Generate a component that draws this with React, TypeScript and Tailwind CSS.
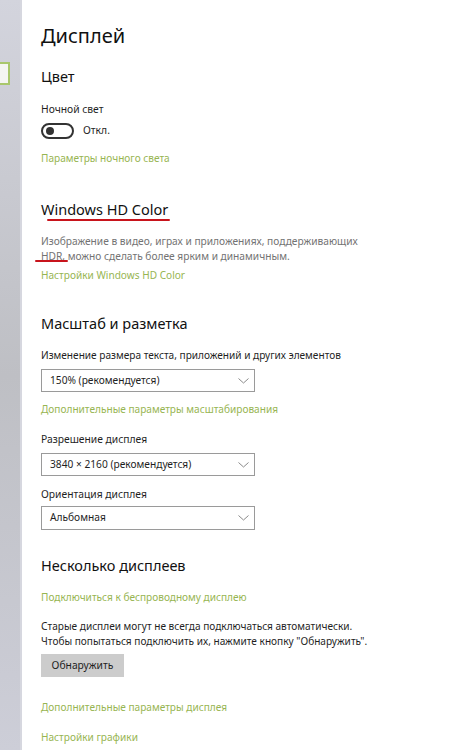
import React from "react";

const link = "block h-[16px] leading-[16px] text-[10.1px] text-[#97b552]";
const label = "block h-[16px] leading-[16px] text-[10.3px] text-[#1f1f1f]";
const h2 = "block h-[20px] leading-[20px] text-[14.5px] text-[#111]";

function Chevron() {
  return (
    <svg width="11" height="6" viewBox="0 0 11 6" className="shrink-0">
      <path d="M0.5 0.5 L5.5 5 L10.5 0.5" fill="none" stroke="#8a8a8a" strokeWidth="1" />
    </svg>
  );
}

function Select({ text, h }: { text: string; h: string }) {
  return (
    <div className={`flex w-[214px] ${h} items-center justify-between border border-[#9a9a9a] bg-white pl-[8px] pr-[5px] text-[10.2px] text-[#1f1f1f]`}>
      <span>{text}</span>
      <Chevron />
    </div>
  );
}

export default function App() {
  return (
    <div
      className="flex h-[750px] w-[476px] overflow-hidden bg-white"
      style={{ fontFamily: '"Noto Sans", "Open Sans", sans-serif' }}
    >
      <div className="relative h-full w-[22px] shrink-0 bg-gradient-to-b from-[#d3d4dd] via-[#bebfc4] to-[#cdced8]">
        <div className="mt-[62px] h-[23px] w-[10px] border-2 border-l-0 border-[#a9c76c] bg-[#f4f5f2]" />
        <div className="absolute right-0 top-0 h-full w-[2px] bg-[#d6d7df]" />
      </div>
      <div className="flex-1 pl-[19px]">
        <div className="mt-[21px] h-[30px] leading-[30px] text-[20px] text-[#111]">Дисплей</div>
        <div className={`mt-[15px] ${h2}`}>Цвет</div>
        <div className={`mt-[15px] ${label}`}>Ночной свет</div>
        <div className="mt-[6px] flex h-[16px] items-center">
          <div className="flex h-[16px] w-[33px] items-center rounded-full border-2 border-[#333] pl-[3px]">
            <div className="h-[8px] w-[8px] rounded-full bg-[#333]" />
          </div>
          <span className="ml-[9px] text-[10.3px] text-[#1f1f1f]">Откл.</span>
        </div>
        <div className={`mt-[11px] ${link}`}>Параметры ночного света</div>

        <div className={`mt-[33px] ${h2}`}>Windows HD Color</div>
        <div className="ml-[6px] h-[2px] w-[123px] rounded-full bg-[#c8141c]" />
        <div className="relative mt-[13px] text-[10.2px] leading-[15px] text-[#737373]">
          <div>Изображение в видео, играх и приложениях, поддерживающих</div>
          <div>HDR, можно сделать более ярким и динамичным.</div>
          <div className="absolute left-[-6px] top-[26px] h-[2px] w-[33px] rounded-full bg-[#c8141c]" />
        </div>
        <div className={`mt-[3px] ${link}`}>Настройки Windows HD Color</div>

        <div className={`mt-[30px] ${h2}`}>Масштаб и разметка</div>
        <div className="mt-[14px] block h-[16px] leading-[16px] text-[10.1px] text-[#1f1f1f]">Изменение размера текста, приложений и других элементов</div>
        <div className="mt-[6px]">
          <Select text="150% (рекомендуется)" h="h-[23px]" />
        </div>
        <div className={`mt-[9px] ${link}`}>Дополнительные параметры масштабирования</div>
        <div className={`mt-[14px] ${label}`}>Разрешение дисплея</div>
        <div className="mt-[6px]">
          <Select text="3840 × 2160 (рекомендуется)" h="h-[23px]" />
        </div>
        <div className={`mt-[10px] ${label}`}>Ориентация дисплея</div>
        <div className="mt-[4px]">
          <Select text="Альбомная" h="h-[24px]" />
        </div>

        <div className={`mt-[25px] ${h2}`}>Несколько дисплеев</div>
        <div className={`mt-[14px] ${link}`}>Подключиться к беспроводному дисплею</div>
        <div className="mt-[14px] text-[10.1px] leading-[15px] text-[#1f1f1f]">
          <div>Старые дисплеи могут не всегда подключаться автоматически.</div>
          <div>Чтобы попытаться подключить их, нажмите кнопку "Обнаружить".</div>
        </div>
        <div className="mt-[5px] flex h-[23px] w-[83px] items-center justify-center bg-[#cccccc] text-[10.3px] text-[#1f1f1f]">
          Обнаружить
        </div>
        <div className={`mt-[22px] ${link}`}>Дополнительные параметры дисплея</div>
        <div className={`mt-[14px] ${link}`}>Настройки графики</div>
      </div>
    </div>
  );
}
